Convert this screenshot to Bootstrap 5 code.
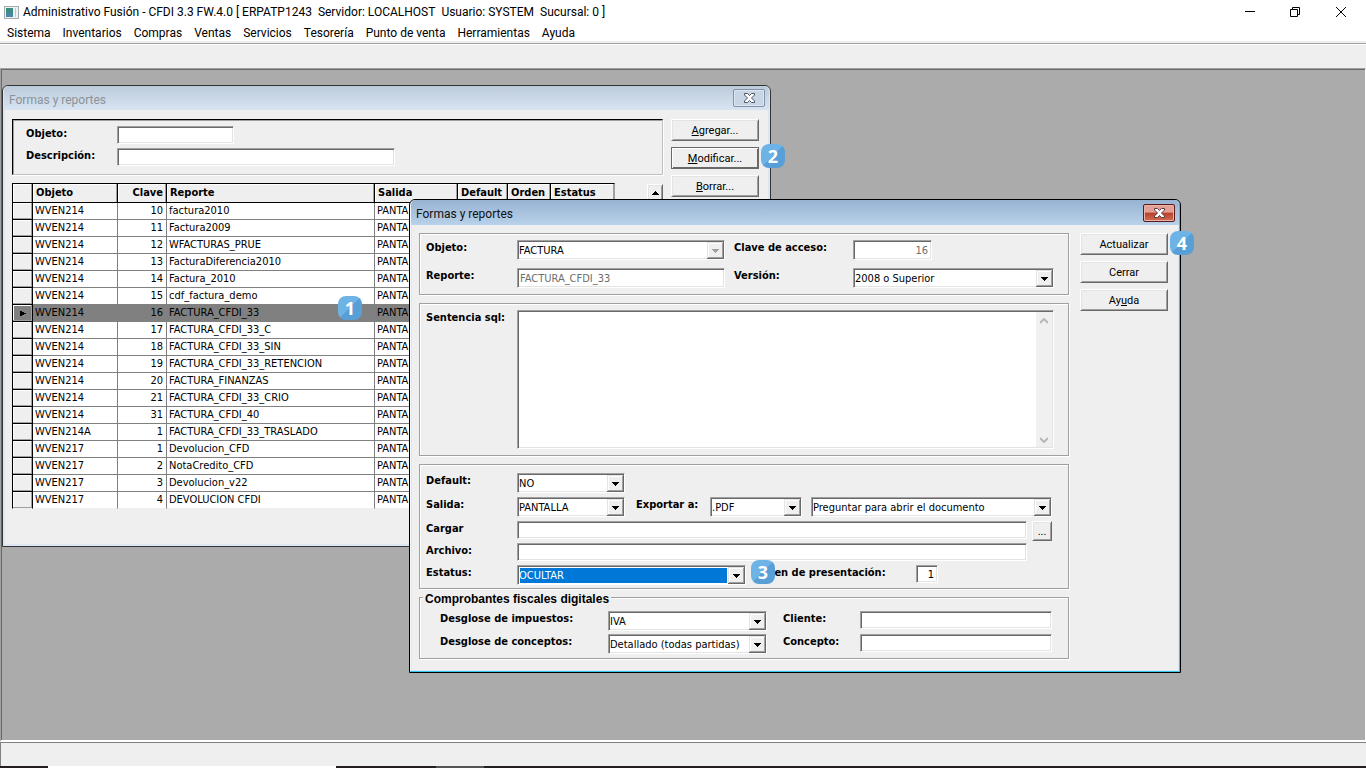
<!DOCTYPE html>
<html lang="es">
<head>
<meta charset="utf-8">
<meta name="viewport" content="width=device-width, initial-scale=1">
<title>Administrativo Fusión</title>
<link href="https://cdn.jsdelivr.net/npm/bootstrap@5.3.0/dist/css/bootstrap.min.css" rel="stylesheet">
<style>
  :root {
    --face: #efefef; --mid: #a0a0a0; --dark: #696969; --lite: #e3e3e3;
    --ui: Roboto, "Noto Sans", sans-serif;
    --form: "DejaVu Sans Condensed", "DejaVu Sans", sans-serif;
    --arrow: url("data:image/svg+xml,%3Csvg xmlns='http://www.w3.org/2000/svg' width='17' height='17'%3E%3Cpath fill='%23696969' d='M0 0h17v17H0z'/%3E%3Cpath fill='%23e3e3e3' d='M0 0h16v16H0z'/%3E%3Cpath fill='%23a0a0a0' d='M1 1h15v15H1z'/%3E%3Cpath fill='%23fff' d='M1 1h14v14H1z'/%3E%3Cpath fill='%23efefef' d='M2 2h13v13H2z'/%3E%3Cpath d='M5 7h7v1H11v1H10v1H9v1H8v-1H7V9H6V8H5z'/%3E%3C/svg%3E");
    --arrow-off: url("data:image/svg+xml,%3Csvg xmlns='http://www.w3.org/2000/svg' width='17' height='17'%3E%3Cpath fill='%23696969' d='M0 0h17v17H0z'/%3E%3Cpath fill='%23e3e3e3' d='M0 0h16v16H0z'/%3E%3Cpath fill='%23a0a0a0' d='M1 1h15v15H1z'/%3E%3Cpath fill='%23fff' d='M1 1h14v14H1z'/%3E%3Cpath fill='%23efefef' d='M2 2h13v13H2z'/%3E%3Cpath fill='%23a0a0a0' d='M5 7h7v1H11v1H10v1H9v1H8v-1H7V9H6V8H5z'/%3E%3C/svg%3E");
    --up: url("data:image/svg+xml,%3Csvg xmlns='http://www.w3.org/2000/svg' width='8' height='6'%3E%3Cpath d='M0 5l4-4 4 4' fill='none' stroke='%23b8b8b8' stroke-width='2'/%3E%3C/svg%3E");
    --down: url("data:image/svg+xml,%3Csvg xmlns='http://www.w3.org/2000/svg' width='8' height='6'%3E%3Cpath d='M0 1l4 4 4-4' fill='none' stroke='%23b8b8b8' stroke-width='2'/%3E%3C/svg%3E");
  }
  body { background: #fff; color: #000; font: 12px/16px var(--ui); }

  /* Application frame */
  .app-title { height: 24px; white-space: nowrap; }
  .title-parts { gap: 6px; }
  .app-menu { height: 17px; padding: 0 7px; gap: 12px; }
  .app-menu a { color: #000; text-decoration: none; }
  .toolstrip { height: 27px; background: var(--face); border-top: 2px solid #efefef; box-shadow: inset 0 1px var(--mid), inset 0 2px #fff; }
  .desk { background: #ababab; border: 1px solid var(--mid); border-right-color: #fff; border-bottom: 2px solid #fff; box-shadow: inset 1px 1px var(--dark); }
  .statusline { height: 24px; background: var(--face); border: solid #808080; border-width: 1px 0 0 1px; }
  .taskedge { height: 2px; background: #231f20; }
  .taskedge span { width: 288px; margin-left: 48px; background: #fff; }
  .taskedge i { width: 48px; margin-left: 100px; background: #555; }

  /* Child windows */
  .win { background: var(--face); border: 1px solid #333; border-radius: 6px 6px 0 0; font: 11px/14px var(--form); }
  .win-list { left: 1px; top: 16px; width: 769px; height: 462px; box-shadow: inset 0 0 0 2px #dde7f3; }
  .win-form { left: 408px; top: 130px; width: 772px; height: 474px; border-color: #000; box-shadow: inset -1px -1px #33c5ea, inset 1px 1px #f4f8fc, inset -2px -2px #dce8f4, inset 2px 0 #dce8f4; }
  .win-head { height: 24px; margin: 0 1px; padding: 0 4px 0 5px; border-radius: 5px 5px 0 0; background: linear-gradient(#bccbdb, #d7e4f2); color: #8c9299; font: 12px/16px var(--ui); }
  .win-form .win-head { height: 25px; background: linear-gradient(#97b3d2, #b9d1ea); color: #111; }
  .win-head span { padding-top: 3px; }
  .shut { width: 32px; height: 18px; padding: 0; border: 1px solid #8391a8; border-radius: 2px; background: #c7d5e4; box-shadow: inset 0 0 0 1px #dde8f2; }
  .shut-hot { border-color: #5c1a1c; background: linear-gradient(#e3a095 0 45%, #bb3f2b 50%, #cf6f55); box-shadow: inset 0 0 0 1px #e9b4aa; }
  .list-body { padding: 9px 11px 0 9px; gap: 8px; }
  .form-body { padding: 8px 12px 0 9px; gap: 11px; }
  .gap-row { gap: 4px; } .gap-panel { gap: 8px; } .gap-cfd { gap: 3px; } .gap-push { gap: 6px; }
  .etched { border: 1px solid var(--mid); box-shadow: 1px 1px #fff, inset 1px 1px #fff; padding: 6px 14px 6px 6px; }
  .sunk { height: 56px; padding: 6px 13px; border: 1px solid; border-color: #000 #c0c0c0 #c0c0c0 #000; box-shadow: inset 1px 1px var(--mid), 1px 1px #fff; }
  .output-panel { padding: 8px 16px 3px 6px; }
  .cfd { margin: 0; padding: 13px 16px 4px 20px; position: relative; }
  .cfd legend { position: absolute; left: 3px; top: -6px; width: auto; margin: 0; padding: 0 2px; background: var(--face); font: 700 12px/14px "Liberation Sans", Arial, sans-serif; }

  /* Controls */
  .field, .pick { height: 20px; min-width: 0; padding: 0 3px 0 2px; border: 1px solid; border-color: var(--mid) #fff #fff var(--mid); border-radius: 0; color: #000;
    background-color: #fff; box-shadow: inset 1px 1px var(--dark), inset -1px -1px var(--lite); font: inherit; }
  .field:disabled { color: #6d6d6d; }
  .field-low { height: 18px; }
  .pick { appearance: none; padding: 2px 20px 0 1px; opacity: 1; background-repeat: no-repeat; box-shadow: inset 1px 1px var(--dark);
    background-position: right 0 top 1px, left bottom; background-size: 17px 17px, 100% 1px; background-image: var(--arrow), linear-gradient(var(--lite), var(--lite)); }
  .pick:disabled { background-image: var(--arrow-off), linear-gradient(var(--lite), var(--lite)); }
  .pick.chosen { color: #fff; background-image: var(--arrow), linear-gradient(#0078d7, #0078d7); background-position: right 0 top 1px, 2px 2px; background-size: 17px 17px, calc(100% - 20px) 15px; }
  .sql { height: 139px; resize: none; overflow: hidden; background-repeat: no-repeat; background-image: var(--up), var(--down), linear-gradient(#f0f0f0, #f0f0f0);
    background-position: right 5px top 7px, right 5px bottom 5px, right 1px top 1px; background-size: 8px 6px, 8px 6px, 16px 100%; }
  .push { height: 22px; padding: 1px 0 0; border: 1px solid; border-color: #fff var(--dark) var(--dark) #fff; border-radius: 0; background: var(--face); color: #000;
    box-shadow: inset 1px 1px var(--lite), inset -1px -1px var(--mid); font: 11px/14px var(--ui); }
  .push-main { border-color: var(--dark); box-shadow: inset 1px 1px #fff, inset -1px -1px var(--dark); }
  .push-dots { width: 20px; height: 20px; }
  .push-col { width: 88px; }
  .tag { font-weight: 700; font-size: 11px; line-height: 16px; white-space: nowrap; flex: none; }
  .tag-a { width: 91px; } .tag-b { width: 119px; margin-left: 9px; } .tag-c { width: 74px; margin-left: 11px; }
  .tag-d { width: 162px; margin-left: 8px; } .tag-e { width: 168px; } .tag-f { width: 77px; margin-left: 16px; }
  .w-key { width: 79px; } .w-object { width: 117px; } .w-descr { width: 278px; } .w-version { width: 201px; }
  .w-short { width: 108px; } .w-ext { width: 92px; } .w-status { width: 229px; } .w-order { width: 22px; } .w-tax { width: 159px; }
  .gap-l { margin-left: 9px; } .gap-dots { margin-left: 5px; } .file-end { margin-right: 25px; } .file-row { height: 18px; }

  /* Report list */
  .grid-tbl { table-layout: fixed; width: 603px; border-collapse: separate; border-spacing: 0; line-height: 14px; }
  .grid-tbl th { height: 20px; padding: 0 3px; background: var(--face); border: solid #000; border-width: 1px 1px 1px 0; box-shadow: inset -1px 0 var(--mid), inset 1px 1px #fff; white-space: nowrap; }
  .grid-tbl td { height: 17px; padding: 0 3px 0 2px; background: #fff; border: solid #808080; border-width: 0 1px 1px 0; white-space: nowrap; overflow: hidden; }
  .grid-tbl th:last-child { border-right-color: var(--mid); }
  .grid-tbl tr > :first-child { border-left: 1px solid #000; }
  .grid-tbl td:first-child { background: var(--face); border-right-color: #000; border-bottom-color: #000; box-shadow: inset -1px -1px var(--mid), inset 1px 1px #fff; }
  .grid-tbl tr.sel td { background: #808080; }
  .grid-tbl tr:last-child td { border-bottom-color: var(--face); }
  .grid-tbl svg { display: block; margin-left: 5px; }
  .scroll-up { width: 16px; height: 17px; margin-top: 1px; }
  .num-badge { width: 24px; height: 24px; border-radius: 8px; background: linear-gradient(135deg, #6db3e6 50%, #579fd6 50%); color: #fff; font: 700 18px/24px "Noto Sans", sans-serif; text-align: center; }
  .b1 { left: 337px; top: 227px; } .b2 { left: 760px; top: 75px; } .b3 { left: 750px; top: 491px; } .b4 { left: 1169px; top: 162px; }
</style>
</head>
<body class="vh-100 d-flex flex-column overflow-hidden">
<header>
  <div class="app-title d-flex align-items-center">
    <svg class="ms-1" width="15" height="13" aria-hidden="true"><rect x=".5" y=".5" width="14" height="12" fill="#eef1f2" stroke="#a5abaf"/><rect x="2" y="2" width="7" height="9" fill="#3c8c83"/><rect x="2" y="7" width="7" height="4" fill="#4a86a8"/><path d="M11 2h1v9h-1z" fill="#c3cacd"/></svg>
    <div class="title-parts d-flex ms-1"><span>Administrativo Fusión - CFDI 3.3 FW.4.0 [ ERPATP1243</span><span>Servidor: LOCALHOST</span><span>Usuario: SYSTEM</span><span>Sucursal: 0 ]</span></div>
    <svg class="ms-auto me-3" width="106" height="15" fill="none" stroke="#000" aria-hidden="true"><path d="M1 6.500h10M46.500 4.500h7v7h-7zM48.500 4v-1.500h7v7H54M92 2l10 10M102 2l-10 10"/></svg>
  </div>
  <nav class="app-menu d-flex align-items-center"><a href="#">Sistema</a><a href="#">Inventarios</a><a href="#">Compras</a><a href="#">Ventas</a><a href="#">Servicios</a><a href="#">Tesorería</a><a href="#">Punto de venta</a><a href="#">Herramientas</a><a href="#">Ayuda</a></nav>
</header>
<div class="toolstrip"></div>

<main class="desk flex-grow-1 position-relative">
  <section class="win win-list position-absolute">
    <div class="win-head d-flex align-items-center justify-content-between"><span>Formas y reportes</span>
      <button type="button" class="shut d-flex align-items-center justify-content-center" aria-label="Cerrar"><svg width="13" height="10"><path d="M1.500.500h3l2 2 2-2h3v1.500L8.500 5l3 3v1.500h-3l-2-2-2 2h-3V8l3-3-3-3z" fill="#fff" stroke="#4c5566"/></svg></button>
    </div>
    <div class="list-body d-flex align-items-start">
      <div class="flex-grow-1 d-flex flex-column gap-panel">
        <div class="sunk d-flex flex-column gap-row">
          <div class="d-flex align-items-start"><label class="tag tag-a" for="fObj">Objeto:</label><input id="fObj" class="field field-low w-object"></div>
          <div class="d-flex align-items-start"><label class="tag tag-a" for="fDes">Descripción:</label><input id="fDes" class="field field-low w-descr"></div>
        </div>
        <div class="d-flex align-items-start justify-content-between">
          <table class="grid-tbl">
            <colgroup><col style="width:21px"><col style="width:85px"><col style="width:49px"><col style="width:208px"><col style="width:83px"><col style="width:50px"><col style="width:43px"><col style="width:64px"></colgroup>
            <thead><tr><th></th><th>Objeto</th><th class="text-end">Clave</th><th>Reporte</th><th>Salida</th><th>Default</th><th>Orden</th><th>Estatus</th></tr></thead>
            <tbody id="rows"></tbody>
          </table>
          <button type="button" class="push scroll-up d-flex align-items-center justify-content-center" aria-label="Subir"><svg width="7" height="4"><path d="M3 0h1v1h1v1h1v1h1v1H0V3h1V2h1V1h1z"/></svg></button>
        </div>
      </div>
      <div class="push-col d-flex flex-column gap-push">
        <button type="button" class="push"><u>A</u>gregar...</button>
        <button type="button" class="push push-main"><u>M</u>odificar...</button>
        <button type="button" class="push"><u>B</u>orrar...</button>
      </div>
    </div>
  </section>

  <section class="win win-form position-absolute">
    <div class="win-head d-flex align-items-center justify-content-between"><span>Formas y reportes</span>
      <button type="button" class="shut shut-hot d-flex align-items-center justify-content-center" aria-label="Cerrar"><svg width="13" height="10"><path d="M1.500.500h3l2 2 2-2h3v1.500L8.500 5l3 3v1.500h-3l-2-2-2 2h-3V8l3-3-3-3z" fill="#fff" stroke="#5a3a3e"/></svg></button>
    </div>
    <form class="form-body d-flex align-items-start">
      <div class="flex-grow-1 d-flex flex-column gap-panel">
        <div class="etched d-flex flex-column gap-panel">
          <div class="d-flex align-items-start">
            <label class="tag tag-a" for="obj">Objeto:</label><select id="obj" class="pick flex-grow-1" disabled><option>FACTURA</option></select>
            <label class="tag tag-b" for="key">Clave de acceso:</label><div class="w-version d-flex"><input id="key" class="field w-key text-end" value="16" disabled></div>
          </div>
          <div class="d-flex align-items-start">
            <label class="tag tag-a" for="rep">Reporte:</label><input id="rep" class="field flex-grow-1" value="FACTURA_CFDI_33" disabled>
            <label class="tag tag-b" for="ver">Versión:</label><select id="ver" class="pick w-version"><option>2008 o Superior</option></select>
          </div>
        </div>
        <div class="etched d-flex align-items-start"><label class="tag tag-a" for="sql">Sentencia sql:</label><textarea id="sql" class="field sql flex-grow-1"></textarea></div>
        <div class="etched output-panel d-flex flex-column gap-row">
          <div class="d-flex align-items-start"><label class="tag tag-a" for="def">Default:</label><select id="def" class="pick w-short"><option>NO</option></select></div>
          <div class="d-flex align-items-start">
            <label class="tag tag-a" for="out">Salida:</label><select id="out" class="pick w-short"><option>PANTALLA</option></select>
            <label class="tag tag-c" for="exp">Exportar a:</label><select id="exp" class="pick w-ext"><option>.PDF</option></select>
            <select class="pick flex-grow-1 gap-l" aria-label="Al exportar"><option>Preguntar para abrir el documento</option></select>
          </div>
          <div class="file-row d-flex align-items-start"><label class="tag tag-a" for="load">Cargar</label><input id="load" class="field field-low flex-grow-1"><button type="button" class="push push-dots gap-dots">...</button></div>
          <div class="d-flex align-items-start"><label class="tag tag-a" for="file">Archivo:</label><input id="file" class="field field-low flex-grow-1 file-end"></div>
          <div class="d-flex align-items-start">
            <label class="tag tag-a" for="sta">Estatus:</label><select id="sta" class="pick chosen w-status"><option>OCULTAR</option></select>
            <label class="tag tag-d" for="ord">Orden de presentación:</label><input id="ord" class="field field-low w-order text-end" value="1">
          </div>
        </div>
        <fieldset class="etched cfd">
          <legend>Comprobantes fiscales digitales</legend>
          <div class="d-flex flex-column gap-cfd">
            <div class="d-flex align-items-start"><label class="tag tag-e" for="tax">Desglose de impuestos:</label><select id="tax" class="pick w-tax"><option>IVA</option></select><label class="tag tag-f" for="cli">Cliente:</label><input id="cli" class="field field-low flex-grow-1"></div>
            <div class="d-flex align-items-start"><label class="tag tag-e" for="itm">Desglose de conceptos:</label><select id="itm" class="pick w-tax"><option>Detallado (todas partidas)</option></select><label class="tag tag-f" for="con">Concepto:</label><input id="con" class="field field-low flex-grow-1"></div>
          </div>
        </fieldset>
      </div>
      <div class="push-col d-flex flex-column gap-push">
        <button type="button" class="push">Actualizar</button>
        <button type="button" class="push">Cerrar</button>
        <button type="button" class="push">Ay<u>u</u>da</button>
      </div>
    </form>
  </section>

  <span class="num-badge b1 position-absolute">1</span>
  <span class="num-badge b2 position-absolute">2</span>
  <span class="num-badge b3 position-absolute">3</span>
  <span class="num-badge b4 position-absolute">4</span>
</main>
<footer>
  <div class="statusline"></div>
  <div class="taskedge d-flex"><span></span><i></i></div>
</footer>
<script>
  const reports = [
    ['WVEN214', 10, 'factura2010'], ['WVEN214', 11, 'Factura2009'], ['WVEN214', 12, 'WFACTURAS_PRUE'],
    ['WVEN214', 13, 'FacturaDiferencia2010'], ['WVEN214', 14, 'Factura_2010'], ['WVEN214', 15, 'cdf_factura_demo'],
    ['WVEN214', 16, 'FACTURA_CFDI_33'], ['WVEN214', 17, 'FACTURA_CFDI_33_C'], ['WVEN214', 18, 'FACTURA_CFDI_33_SIN'],
    ['WVEN214', 19, 'FACTURA_CFDI_33_RETENCION'], ['WVEN214', 20, 'FACTURA_FINANZAS'], ['WVEN214', 21, 'FACTURA_CFDI_33_CRIO'],
    ['WVEN214', 31, 'FACTURA_CFDI_40'], ['WVEN214A', 1, 'FACTURA_CFDI_33_TRASLADO'], ['WVEN217', 1, 'Devolucion_CFD'],
    ['WVEN217', 2, 'NotaCredito_CFD'], ['WVEN217', 3, 'Devolucion_v22'], ['WVEN217', 4, 'DEVOLUCION CFDI']
  ];
  const mark = '<svg width="6" height="5"><path d="M0 0h2v1h2v1h2v1H4v1H2v1H0z"/></svg>';
  document.getElementById('rows').innerHTML = reports.map(([obj, key, name]) => {
    const on = key === 16;
    return `<tr${on ? ' class="sel"' : ''}><td>${on ? mark : ''}</td><td>${obj}</td><td class="text-end">${key}</td><td>${name}</td><td>PANTALLA</td><td></td><td></td><td></td></tr>`;
  }).join('');
</script>
</body>
</html>
